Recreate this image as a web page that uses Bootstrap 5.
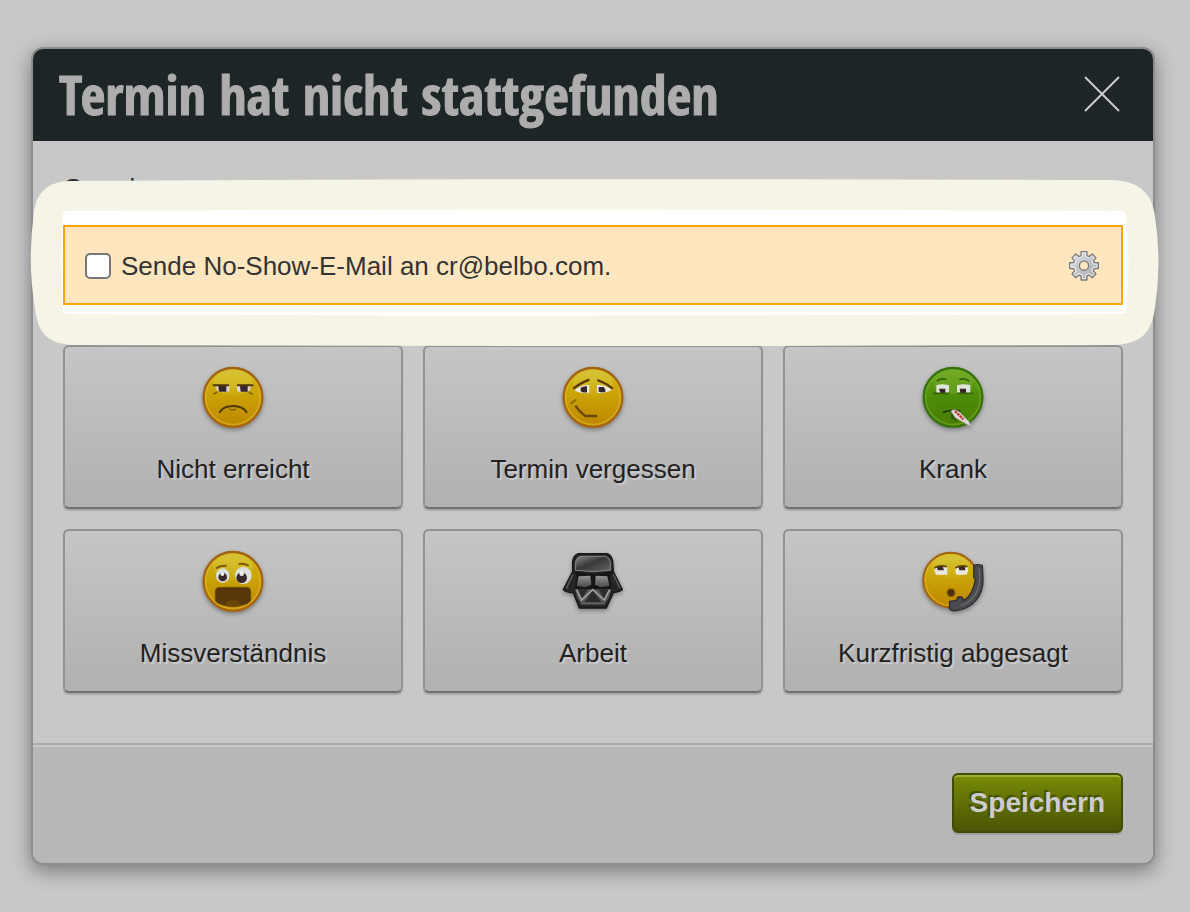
<!DOCTYPE html>
<html lang="de">
<head>
<meta charset="utf-8">
<meta name="viewport" content="width=device-width, initial-scale=1">
<title>Termin hat nicht stattgefunden</title>
<link rel="stylesheet" href="https://cdn.jsdelivr.net/npm/bootstrap@5.3.0/dist/css/bootstrap.min.css">
<style>
  body { background: #c8c8c8; color: #2b2b2b; font: 26px/30px "Liberation Sans", Arial, sans-serif; }
  .page-wrap { padding: 47px 35px 47px 31px; }
  .dialog { background: #c8c8c8; border: 2px solid #8c8d8d; border-radius: 12px; box-shadow: 0 6px 20px rgba(0,0,0,.4); }
  .dialog-head { background: #1e2527; border-radius: 10px 10px 0 0; padding: 0 32px 2px 26px; height: 92px; }
  .dialog-head h1 { font: 700 54px/90px "Open Sans Condensed", "Liberation Sans Narrow", "Open Sans", sans-serif; color: #adadad; -webkit-text-stroke: 1px #adadad; }
  .close-btn { width: 38px; height: 38px; }
  .dialog-body { padding: 32px 30px 50px; }
  .reason-title { margin-bottom: 22px; }
  .notice { margin-bottom: 40px; }
  .notice-halo { inset: -46px -36px -41px -33px; width: calc(100% + 69px); height: 167px; pointer-events: none; }
  .notice-box { background: #ffe6be; border: 2px solid #ffa500; padding: 2px 22px 0 20px; height: 80px; }
  .notice-box .form-check-input { width: 26px; height: 26px; border: 2px solid #76767a; border-radius: 5px; background-color: #fff; }
  .notice-box label { margin-left: 10px; padding-bottom: 1px; color: #333; }
  .reasons { --bs-gutter-x: 20px; --bs-gutter-y: 20px; }
  .reason-btn { height: 164px; padding: 14px 8px 23px; border: 2px solid #929292; border-bottom-color: #707070; border-radius: 6px; background: linear-gradient(#c5c5c5, #b1b1b1); box-shadow: 0 2px 1px rgba(0,0,0,.16); color: #222; text-shadow: 2px 2px 1px rgba(255,255,255,.3); }
  .reason-btn svg { width: 72px; height: 72px; filter: drop-shadow(0 2px 2px rgba(0,0,0,.35)); }
  .dialog-foot { background: #b7b7b7; border-top: 2px solid #aaa; box-shadow: inset 0 2px #c9c9c9; border-radius: 0 0 10px 10px; padding: 28px 30px 30px; }
  .save-btn { height: 60px; padding: 0 16px; border: 2px solid #424b04; border-radius: 6px; background: linear-gradient(#788b07, #4a5404); box-shadow: inset 0 2px #a2b032, 0 2px #a0a0a0; color: #ccc; font-weight: 700; font-size: 28px; text-shadow: -2px -2px 1px rgba(40,48,0,.55); }
</style>
</head>
<body>
<svg width="0" height="0" class="position-absolute" aria-hidden="true">
  <defs>
    <filter id="soft" x="-10%" y="-10%" width="120%" height="120%" color-interpolation-filters="sRGB"><feGaussianBlur stdDeviation="2"/></filter>
    <linearGradient id="gold" x1="0" y1="0" x2="0" y2="1"><stop offset="0" stop-color="#d0b512"/><stop offset=".45" stop-color="#caa406"/><stop offset="1" stop-color="#bd8500"/></linearGradient>
    <linearGradient id="goldEdge" x1="0" y1="0" x2="0" y2="1"><stop offset="0" stop-color="#a06310"/><stop offset="1" stop-color="#a8650c"/></linearGradient>
    <linearGradient id="shine" x1="0" y1="0" x2="0" y2="1"><stop offset="0" stop-color="#dcd050" stop-opacity=".6"/><stop offset="1" stop-color="#dcd050" stop-opacity=".1"/></linearGradient>
    <linearGradient id="sick" x1="0" y1="0" x2="0" y2="1"><stop offset="0" stop-color="#6da51c"/><stop offset=".5" stop-color="#4c8c0a"/><stop offset="1" stop-color="#4b7d02"/></linearGradient>
    <linearGradient id="helmet" x1="0" y1="0" x2="1" y2="1"><stop offset="0" stop-color="#8a8a8a"/><stop offset=".45" stop-color="#383838"/><stop offset="1" stop-color="#666"/></linearGradient>
    <linearGradient id="lens" x1="0" y1="0" x2="0" y2="1"><stop offset="0" stop-color="#969696"/><stop offset="1" stop-color="#484848"/></linearGradient>
    <linearGradient id="steel" x1="0" y1="0" x2="1" y2="1"><stop offset="0" stop-color="#dedee0"/><stop offset="1" stop-color="#a5a8ae"/></linearGradient>
    <g id="face">
      <circle cx="129" cy="127" r="88" fill="url(#gold)" stroke="url(#goldEdge)" stroke-width="7"/>
      <circle cx="129" cy="127" r="82" fill="none" stroke="#dfb62b" stroke-opacity=".65" stroke-width="5"/>
      <ellipse cx="129" cy="84" rx="60" ry="38" fill="url(#shine)"/>
    </g>
  </defs>
</svg>

<main class="page-wrap">
  <section class="dialog" aria-labelledby="dialog-title">
    <header class="dialog-head d-flex align-items-center justify-content-between">
      <h1 id="dialog-title" class="m-0 text-nowrap">Termin hat nicht stattgefunden</h1>
      <button type="button" class="close-btn btn p-0 border-0 d-flex" aria-label="Schließen">
        <svg viewBox="0 0 38 38" width="38" height="38"><path d="M2 2 36 36M36 2 2 36" stroke="#ccc" stroke-width="2" fill="none"/></svg>
      </button>
    </header>

    <div class="dialog-body">
      <div class="reason-title">Grund</div>

      <div class="notice position-relative">
        <svg class="notice-halo position-absolute" viewBox="30 179 1129 167" preserveAspectRatio="none" aria-hidden="true">
          <path fill="#f6f4e6" d="M70 181Q590 178 1112 180C1140 181 1152 194 1155 216Q1162 262 1155 308C1151 334 1141 344 1112 345Q590 347 72 345C47 343 38 333 35 308Q27 262 34 212C37 192 47 182 70 181Z"/>
          <path fill="#fff" d="M67 211Q590 208 1122 211Q1125 211 1126 214Q1131 262 1126 311Q1125 314 1122 314Q590 317 67 314Q64 314 63 311Q58 262 63 214Q64 211 67 211Z"/>
        </svg>
        <div class="notice-box position-relative d-flex align-items-center">
          <input class="form-check-input m-0 flex-shrink-0" type="checkbox" id="send-mail">
          <label for="send-mail">Sende No-Show-E-Mail an cr@belbo.com.</label>
          <button type="button" class="btn p-0 border-0 ms-auto d-flex" aria-label="Einstellungen">
            <svg width="30" height="30" viewBox="3 3 90 92">
              <g stroke-linejoin="round">
                <path fill="url(#steel)" fill-rule="evenodd" stroke="#77777c" stroke-width="4" d="M39 5H57V17L64 20 73 12 85 24 77 33 80 39H92V57H80L77 64 85 73 73 85 64 77 57 80V92H39V80L32 77 23 85 11 73 19 64 16 57H4V39H16L19 33 11 24 23 12 32 20 39 17ZM48 34A14 14 0 1 0 48 62A14 14 0 1 0 48 34Z"/>
                <path fill="none" stroke="#f0f0f0" stroke-width="3" d="M43 9H53V20L65 25 73 17 80 24 72 33 76 43H88V53H76L72 64 80 73 73 80 64 72 53 76V88H43V76L32 72 23 80 16 73 24 64 20 53H8V43H20L24 33 16 24 23 17 32 25 43 20Z"/>
              </g>
            </svg>
          </button>
        </div>
      </div>

      <div class="row reasons">
        <div class="col-4">
          <button type="button" class="reason-btn w-100 d-flex flex-column align-items-center justify-content-between">
            <svg viewBox="21 18 216 216" aria-hidden="true"><g filter="url(#soft)">
              <use href="#face"/>
              <path fill="#ddd5ca" d="M79 92H118V108Q98 116 80 106ZM141 92H181V106Q160 116 141 108Z"/>
              <path fill="#37252c" d="M85 92H109V110H87ZM150 92H173V110H152Z"/>
              <path fill="none" stroke="#4d360a" stroke-width="6" d="M69 91H117M141 91H190"/>
              <path fill="none" stroke="#876209" stroke-width="5" d="M70 118 82 111M176 111 188 118M118 162Q128 168 138 162"/>
              <path fill="none" stroke="#4d3806" stroke-width="6" d="M88 173Q99 153 129 153T171 173"/>
            </g></svg>
            <span>Nicht erreicht</span>
          </button>
        </div>
        <div class="col-4">
          <button type="button" class="reason-btn w-100 d-flex flex-column align-items-center justify-content-between">
            <svg viewBox="21 18 216 216" aria-hidden="true"><g filter="url(#soft)">
              <use href="#face"/>
              <path fill="#ece9e2" d="M75 104Q96 88 118 90V113Q95 117 76 108ZM141 90Q165 88 186 105Q164 117 141 113Z"/>
              <path fill="#37252c" d="M92 98Q104 92 111 94V112Q99 114 92 109ZM146 96H162Q167 104 166 111Q155 113 146 110Z"/>
              <path fill="none" stroke="#553a06" stroke-width="7" d="M70 101Q88 86 118 74M142 75Q168 84 188 101"/>
              <path fill="none" stroke="#6b4909" stroke-width="7" d="M76 152Q86 168 106 183H141"/>
              <path fill="none" stroke="#8d650a" stroke-width="6" d="M64 148Q66 140 79 134"/>
            </g></svg>
            <span>Termin vergessen</span>
          </button>
        </div>
        <div class="col-4">
          <button type="button" class="reason-btn w-100 d-flex flex-column align-items-center justify-content-between">
            <svg viewBox="21 18 216 216" aria-hidden="true"><g filter="url(#soft)">
              <circle cx="129" cy="127" r="88" fill="url(#sick)" stroke="#37730d" stroke-width="7"/>
              <circle cx="129" cy="127" r="82" fill="none" stroke="#75ae2c" stroke-opacity=".6" stroke-width="5"/>
              <ellipse cx="129" cy="82" rx="60" ry="36" fill="#9cc74d" opacity=".2"/>
              <path fill="#dde5d6" d="M79 91Q98 85 117 91V113Q98 119 79 113ZM141 91Q162 85 181 91V113Q160 119 141 113Z"/>
              <path fill="#35272b" d="M87 101H106V114H91ZM149 101H168V114H151Z"/>
              <path fill="none" stroke="#356109" stroke-width="5" d="M69 115H118M141 115H190M81 79Q89 69 109 73M148 73Q168 69 178 79"/>
              <path fill="#355f07" d="M122 170H139L141 200 122 190Z"/>
              <path fill="none" stroke="#1f4204" stroke-width="6" d="M99 174Q107 164 151 167"/>
              <path fill="#dedbd9" stroke="#a39c9b" stroke-width="2" d="M123 169Q128 160 145 168L176 199 184 215 170 208 136 188Z"/>
              <path stroke="#bc382d" stroke-width="7" stroke-dasharray="8 2" d="M135 168 160 193"/>
            </g></svg>
            <span>Krank</span>
          </button>
        </div>
        <div class="col-4">
          <button type="button" class="reason-btn w-100 d-flex flex-column align-items-center justify-content-between">
            <svg viewBox="21 15 216 216" aria-hidden="true"><g filter="url(#soft)">
              <use href="#face" y="-3"/>
              <ellipse cx="98" cy="107" rx="20" ry="22" fill="#dbe0d8"/><ellipse cx="160" cy="106" rx="25" ry="26" fill="#dbe0d8"/>
              <circle cx="98" cy="111" r="13" fill="#38292d"/><circle cx="155" cy="113" r="16" fill="#38292d"/>
              <circle cx="97" cy="102" r="6" fill="#eee"/><circle cx="155" cy="101" r="7" fill="#eee"/>
              <path fill="none" stroke="#7c590b" stroke-width="6" d="M78 86Q86 76 110 77M146 72Q163 69 176 77"/>
              <path fill="#593607" stroke="#735009" stroke-width="3" d="M88 142H170Q182 142 182 154V181Q176 197 129 199Q82 197 76 181V154Q76 142 88 142Z"/>
              <path fill="#6a4403" d="M106 197Q108 178 129 181Q151 178 153 197Q129 202 106 197Z"/>
            </g></svg>
            <span>Missverständnis</span>
          </button>
        </div>
        <div class="col-4">
          <button type="button" class="reason-btn w-100 d-flex flex-column align-items-center justify-content-between">
            <svg viewBox="21 15 216 216" aria-hidden="true"><g filter="url(#soft)">
              <path fill="#252525" stroke="#171717" stroke-width="4" stroke-linejoin="round" d="M85 41H172Q186 47 188 65L190 95 217 149Q207 157 190 158L169 204H88L70 158Q51 158 40 149L68 95V64Q70 46 85 41Z"/>
              <path fill="none" stroke="#555" stroke-width="5" d="M69 103 49 145M190 103 210 145"/>
              <path fill="url(#helmet)" stroke="#858585" stroke-width="3" d="M90 49H168Q181 55 182 70V91Q129 98 76 91V70Q77 54 90 49Z"/>
              <path fill="#161616" d="M74 93 128 103 184 93 181 111 184 149H74L80 111Z"/>
              <path fill="url(#lens)" d="M86 109 121 107 124 134 107 142 80 138ZM137 107 172 109 178 138 151 142 135 134Z"/>
              <path fill="#555" d="M75 148H184L176 174 164 192H93L82 174Z"/>
              <path fill="#2c2c2c" d="M83 148H113L94 179ZM145 148H176L164 179ZM128 151 154 186H104Z"/>
              <path fill="none" stroke="#a0a0a0" stroke-width="5" d="M80 149 95 180 128 149 163 180 179 149"/>
              <path stroke="#666" stroke-width="3" d="M93 192H166"/>
            </g></svg>
            <span>Arbeit</span>
          </button>
        </div>
        <div class="col-4">
          <button type="button" class="reason-btn w-100 d-flex flex-column align-items-center justify-content-between">
            <svg viewBox="21 15 216 216" aria-hidden="true"><g filter="url(#soft)">
              <g transform="translate(2 2) scale(.93)"><use href="#face"/></g>
              <path fill="#ece8df" d="M74 82H112V104H78Q72 94 74 82ZM137 82H172L175 92 170 104H139Q134 94 137 82Z"/>
              <path fill="#39282c" d="M80 78H98L102 91H83ZM145 78H164L166 91H148Z"/>
              <path fill="none" stroke="#5f420a" stroke-width="5" d="M73 84Q88 74 110 80M136 84Q151 74 172 80"/>
              <circle cx="123" cy="158" r="11" fill="#47300b" stroke="#79500a" stroke-width="4"/>
              <path fill="#494a4d" stroke="#2e2f32" stroke-width="4" stroke-linejoin="round" d="M191 76Q202 72 217 76L219 118Q220 155 198 181Q177 206 139 212Q122 214 118 205L119 184 139 181 144 171H155L163 181Q189 163 196 119L191 112Z"/>
              <path fill="none" stroke="#6a6b6e" stroke-width="4" d="M208 85 209 118Q208 151 189 173Q171 192 151 197"/>
            </g></svg>
            <span>Kurzfristig abgesagt</span>
          </button>
        </div>
      </div>
    </div>

    <footer class="dialog-foot d-flex justify-content-end">
      <button type="submit" class="save-btn">Speichern</button>
    </footer>
  </section>
</main>
<script src="https://cdn.jsdelivr.net/npm/bootstrap@5.3.0/dist/js/bootstrap.bundle.min.js"></script>
</body>
</html>
